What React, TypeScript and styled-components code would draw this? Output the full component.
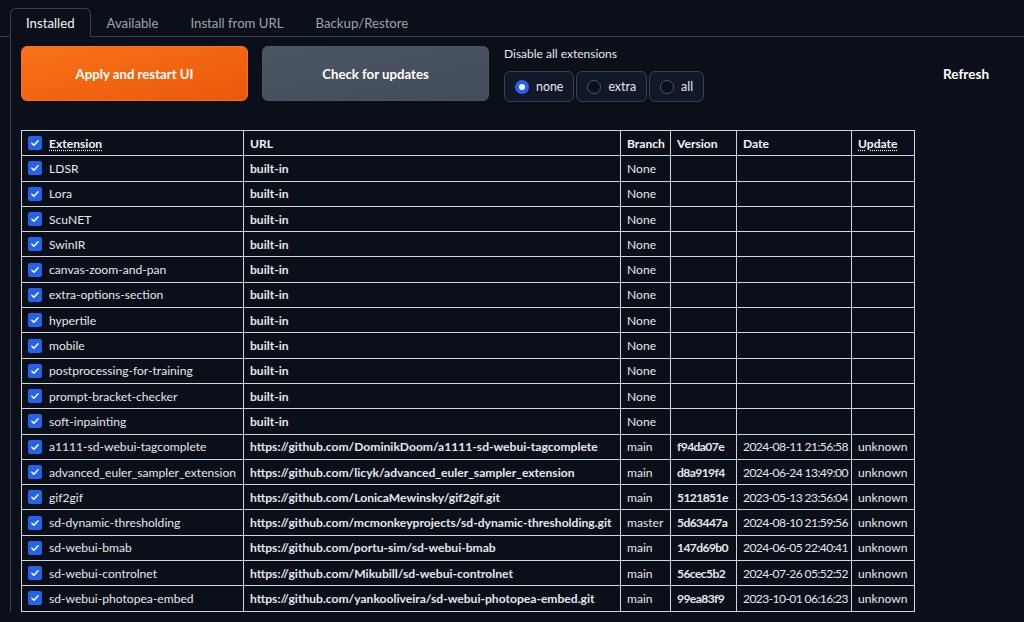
import React from "react"
import styled, { createGlobalStyle } from "styled-components"

const GlobalStyle = createGlobalStyle`
    html, body {
        margin: 0;
        padding: 0;
        background: #0b0f19;
        color: #e5e7eb;
        font-family: "Lato", "Noto Sans", sans-serif;
    }
`

const Page = styled.div`
    width: 1024px;
    height: 622px;
    overflow: hidden;
    padding-top: 8px;
    box-sizing: border-box;
`

const TabBar = styled.div`
    display: flex;
    padding-left: 10px;
    border-bottom: 1px solid #374151;
    height: 28px;
`

const Tab = styled.div<{ $active?: boolean }>`
    padding: 0 15px;
    font-size: 13.2px;
    line-height: 28px;
    color: ${(p) => (p.$active ? "#f3f4f6" : "#9ca3af")};
    border: 1px solid ${(p) => (p.$active ? "#374151" : "transparent")};
    border-bottom: none;
    border-radius: 6px 6px 0 0;
    background: #0b0f19;
    height: ${(p) => (p.$active ? "29px" : "28px")};
    box-sizing: border-box;
`

const Panel = styled.div`
    border-left: 1px solid #374151;
    margin-left: 10px;
    padding: 9px 10px 0 10px;
`

const Toolbar = styled.div`
    display: flex;
    align-items: flex-start;
`

const BigButton = styled.button<{ $variant: "primary" | "secondary" }>`
    width: 227px;
    height: 55px;
    border-radius: 6px;
    border: 1px solid ${(p) => (p.$variant === "primary" ? "#f97316" : "#4b5563")};
    background: ${(p) =>
        p.$variant === "primary"
            ? "linear-gradient(to bottom right, #f97316, #ea580c)"
            : "linear-gradient(to bottom right, #4b5563, #434c5a)"};
    color: #ffffff;
    font-family: inherit;
    font-weight: 700;
    font-size: 13.2px;
    margin-right: 14px;
    cursor: pointer;
`

const RadioBlock = styled.div`
    display: flex;
    flex-direction: column;
    margin-left: 1px;
`

const RadioLabel = styled.div`
    font-size: 12px;
    color: #e5e7eb;
    line-height: 16px;
    margin-bottom: 9px;
`

const RadioRow = styled.div`
    display: flex;
    gap: 2px;
`

const RadioPill = styled.label`
    display: flex;
    align-items: center;
    gap: 7px;
    height: 31px;
    padding: 0 10px;
    box-sizing: border-box;
    border: 1px solid #374151;
    border-radius: 6px;
    background: #111827;
    font-size: 12.4px;
    color: #e5e7eb;
`

const RadioDot = styled.span<{ $checked?: boolean }>`
    width: 14px;
    height: 14px;
    border-radius: 50%;
    box-sizing: border-box;
    border: ${(p) => (p.$checked ? "4px solid #2563eb" : "1px solid #4b5563")};
    background: ${(p) => (p.$checked ? "#ffffff" : "#0b0f19")};
`

const Spacer = styled.div`
    flex: 1;
`

const RefreshButton = styled.button`
    width: 96px;
    height: 55px;
    border: none;
    background: transparent;
    color: #ffffff;
    font-family: inherit;
    font-weight: 700;
    font-size: 13.6px;
`

const Table = styled.table`
    margin-top: 28px;
    border-collapse: collapse;
    border: 1px solid #9ca3af;
    font-size: 12.1px;
    table-layout: fixed;
    width: 894px;
`

const Th = styled.th<{ $w: number }>`
    width: ${(p) => p.$w - 13}px;
    text-align: left;
    font-weight: 700;
    border: 1px solid #d1d5db;
    padding: 0 6px;
    height: 24.3px;
    color: #f3f4f6;
    white-space: nowrap;
    overflow: hidden;
`

const Td = styled.td<{ $bold?: boolean; $tight?: boolean }>`
    border: 1px solid #d1d5db;
    padding: 0 6px;
    height: 24.3px;
    font-weight: ${(p) => (p.$bold ? 700 : 400)};
    letter-spacing: ${(p) => (p.$tight ? "-0.6px" : "normal")};
    color: #e5e7eb;
    white-space: nowrap;
    overflow: hidden;
`

const Dotted = styled.span`
    text-decoration: underline dotted;
    text-underline-offset: 2px;
`

const NameCell = styled.span`
    display: flex;
    align-items: center;
    gap: 7px;
`

const Box = styled.span`
    width: 14px;
    height: 14px;
    border-radius: 2px;
    background: #2563eb;
    display: inline-flex;
    align-items: center;
    justify-content: center;
    flex-shrink: 0;
`

const Check = () => (
    <Box>
        <svg width="10" height="10" viewBox="0 0 16 16">
            <path d="M3 8.5l3.2 3.2L13 4.5" fill="none" stroke="#fff" strokeWidth="2.4" strokeLinecap="round" strokeLinejoin="round" />
        </svg>
    </Box>
)

type Row = { name: string; url: string; branch: string; version?: string; date?: string; update?: string }

const builtIns = [
    "LDSR",
    "Lora",
    "ScuNET",
    "SwinIR",
    "canvas-zoom-and-pan",
    "extra-options-section",
    "hypertile",
    "mobile",
    "postprocessing-for-training",
    "prompt-bracket-checker",
    "soft-inpainting",
]

const rows: Row[] = [
    ...builtIns.map((name) => ({ name, url: "built-in", branch: "None" })),
    { name: "a1111-sd-webui-tagcomplete", url: "https://github.com/DominikDoom/a1111-sd-webui-tagcomplete", branch: "main", version: "f94da07e", date: "2024-08-11 21:56:58", update: "unknown" },
    { name: "advanced_euler_sampler_extension", url: "https://github.com/licyk/advanced_euler_sampler_extension", branch: "main", version: "d8a919f4", date: "2024-06-24 13:49:00", update: "unknown" },
    { name: "gif2gif", url: "https://github.com/LonicaMewinsky/gif2gif.git", branch: "main", version: "5121851e", date: "2023-05-13 23:56:04", update: "unknown" },
    { name: "sd-dynamic-thresholding", url: "https://github.com/mcmonkeyprojects/sd-dynamic-thresholding.git", branch: "master", version: "5d63447a", date: "2024-08-10 21:59:56", update: "unknown" },
    { name: "sd-webui-bmab", url: "https://github.com/portu-sim/sd-webui-bmab", branch: "main", version: "147d69b0", date: "2024-06-05 22:40:41", update: "unknown" },
    { name: "sd-webui-controlnet", url: "https://github.com/Mikubill/sd-webui-controlnet", branch: "main", version: "56cec5b2", date: "2024-07-26 05:52:52", update: "unknown" },
    { name: "sd-webui-photopea-embed", url: "https://github.com/yankooliveira/sd-webui-photopea-embed.git", branch: "main", version: "99ea83f9", date: "2023-10-01 06:16:23", update: "unknown" },
]

const App: React.FC = () => {
    return (
        <Page>
            <GlobalStyle />
            <TabBar>
                <Tab $active>Installed</Tab>
                <Tab>Available</Tab>
                <Tab>Install from URL</Tab>
                <Tab>Backup/Restore</Tab>
            </TabBar>
            <Panel>
                <Toolbar>
                    <BigButton $variant="primary">Apply and restart UI</BigButton>
                    <BigButton $variant="secondary">Check for updates</BigButton>
                    <RadioBlock>
                        <RadioLabel>Disable all extensions</RadioLabel>
                        <RadioRow>
                            <RadioPill>
                                <RadioDot $checked />
                                none
                            </RadioPill>
                            <RadioPill>
                                <RadioDot />
                                extra
                            </RadioPill>
                            <RadioPill>
                                <RadioDot />
                                all
                            </RadioPill>
                        </RadioRow>
                    </RadioBlock>
                    <Spacer />
                    <RefreshButton>Refresh</RefreshButton>
                </Toolbar>
                <Table>
                    <thead>
                        <tr>
                            <Th $w={222}>
                                <NameCell>
                                    <Check />
                                    <Dotted>Extension</Dotted>
                                </NameCell>
                            </Th>
                            <Th $w={377}>URL</Th>
                            <Th $w={50}>Branch</Th>
                            <Th $w={66}>Version</Th>
                            <Th $w={115}>Date</Th>
                            <Th $w={63}>
                                <Dotted>Update</Dotted>
                            </Th>
                        </tr>
                    </thead>
                    <tbody>
                        {rows.map((r) => (
                            <tr key={r.name}>
                                <Td>
                                    <NameCell>
                                        <Check />
                                        {r.name}
                                    </NameCell>
                                </Td>
                                <Td $bold>{r.url}</Td>
                                <Td>{r.branch}</Td>
                                <Td $bold $tight>
                                    {r.version}
                                </Td>
                                <Td $tight>{r.date}</Td>
                                <Td>{r.update}</Td>
                            </tr>
                        ))}
                    </tbody>
                </Table>
            </Panel>
        </Page>
    )
}

export default App
